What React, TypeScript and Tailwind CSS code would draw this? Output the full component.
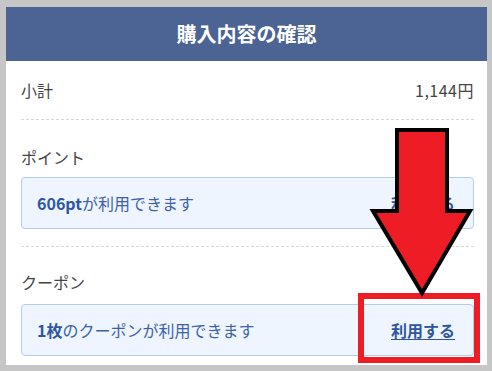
export default function App() {
  const font = { fontFamily: '"Noto Sans CJK JP", "Noto Sans", sans-serif' };
  return (
    <div
      className="relative w-[492px] h-[371px] bg-[#c6c6c6] pt-[7px] pl-[6px] pr-[5px] pb-[6px]"
      style={font}
    >
      <div className="h-full bg-white flex flex-col">
        <div className="h-[54px] shrink-0 bg-[#4b6493] flex items-center justify-center text-white font-bold text-[20px]">
          購入内容の確認
        </div>
        <div className="flex flex-col pl-[15px] pr-[13px]">
          <div className="h-[59px] flex items-center justify-between text-[16px] text-[#444] border-b border-dashed border-[#d8d8d8]">
            <span>小計</span>
            <span className="tracking-[0.5px]">1,144円</span>
          </div>
          <div className="pt-[25px] pb-[17px] border-b border-dashed border-[#d8d8d8]">
            <div className="h-[24px] flex items-center text-[16px] text-[#444]">ポイント</div>
            <div className="mt-[8px] h-[52px] rounded-[4px] border border-[#b3cbee] bg-[#eef5fe] flex items-center justify-between pl-[15px] pr-[18px] text-[16px]">
              <span className="text-[#3d63a6]">
                <span className="font-bold text-[#2f57a0]">606pt</span>が利用できます
              </span>
              <span className="font-bold text-[#2f57a0] underline underline-offset-2">利用する</span>
            </div>
          </div>
          <div className="pt-[23px]">
            <div className="h-[24px] flex items-center text-[16px] text-[#444]">クーポン</div>
            <div className="mt-[10px] h-[52px] rounded-[4px] border border-[#b3cbee] bg-[#eef5fe] flex items-center justify-between pl-[15px] pr-[18px] text-[16px]">
              <span className="text-[#3d63a6]">
                <span className="font-bold text-[#2f57a0]">1枚</span>のクーポンが利用できます
              </span>
              <span className="font-bold text-[#2f57a0] underline underline-offset-2">利用する</span>
            </div>
          </div>
        </div>
      </div>
      <div className="absolute left-[358px] top-[293px] w-[122px] h-[70px] border-[6px] border-[#ee1c25]" />
      <svg className="absolute left-[368px] top-[125px]" width="108" height="175" viewBox="0 0 108 175">
        <polygon
          points="29,5 79,5 79,86 102,86 54,168 5,86 29,86"
          fill="#ee1c25"
          stroke="#000"
          strokeWidth="4"
          strokeLinejoin="miter"
        />
      </svg>
    </div>
  );
}
